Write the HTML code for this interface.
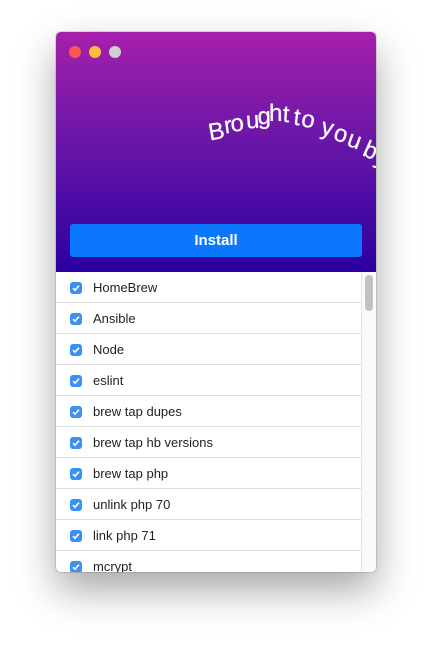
<!DOCTYPE html>
<html><head><style>
body{margin:0;width:432px;height:653px;background:#fff;position:relative;overflow:hidden;font-family:"Liberation Sans",sans-serif}
.win{position:absolute;left:56px;top:32px;width:320px;height:540px;border-radius:5px;overflow:hidden;box-shadow:0 18px 40px rgba(0,0,0,.35),0 0 0 1px rgba(0,0,0,.12);background:#fff}
.hdr{position:absolute;left:0;top:0;width:320px;height:240px;background:linear-gradient(#a520ab,#6a16a8 45%,#2a00a0 100%);overflow:hidden}
.dot{position:absolute;top:14px;width:12px;height:12px;border-radius:50%}
.btn{position:absolute;left:14px;top:192px;width:292px;height:33px;background:#0a77fd;border-radius:3px;color:#fff;font-weight:bold;font-size:15px;text-align:center;line-height:33px}
.c{position:absolute;color:#fff;font-size:24px;transform-origin:50% 100%;text-shadow:0 0 .6px #fff}
.list{position:absolute;left:0;top:240px;width:305px}
.row{height:30px;border-bottom:1px solid #ddd;position:relative;font-size:13px;color:#222;line-height:31px}
.row span{position:absolute;left:37px}
.cb{position:absolute;left:14px;top:10px;width:12px;height:12px;border-radius:3px;background:#3a91f5}
.cb svg{position:absolute;left:0;top:0}
.sb{position:absolute;left:305px;top:240px;width:15px;height:300px;background:#fafafa;border-left:1px solid #e5e5e5}
.th{position:absolute;left:3px;top:3px;width:8px;height:36px;border-radius:4px;background:#c2c2c2}
</style></head><body>
<div class="win">
<div class="hdr">
<div class="dot" style="left:13px;background:#fc5753"></div>
<div class="dot" style="left:33px;background:#fdbc40"></div>
<div class="dot" style="left:53px;background:#cfcfcf"></div>
<div class="c" style="left:155px;top:86px;transform:rotate(-10deg)">B</div>
<div class="c" style="left:170px;top:80px;transform:rotate(-8deg)">r</div>
<div class="c" style="left:176px;top:78px;transform:rotate(-6deg)">o</div>
<div class="c" style="left:191px;top:75px;transform:rotate(-4deg)">u</div>
<div class="c" style="left:202px;top:71px;transform:rotate(-2deg)">g</div>
<div class="c" style="left:213px;top:68px;transform:rotate(0deg)">h</div>
<div class="c" style="left:226px;top:69px;transform:rotate(3deg)">t</div>
<div class="c" style="left:236px;top:72px;transform:rotate(7deg)">t</div>
<div class="c" style="left:243px;top:74px;transform:rotate(10deg)">o</div>
<div class="c" style="left:262px;top:82px;transform:rotate(14deg)">y</div>
<div class="c" style="left:274px;top:88px;transform:rotate(17deg)">o</div>
<div class="c" style="left:287px;top:94px;transform:rotate(20deg)">u</div>
<div class="c" style="left:302px;top:104px;transform:rotate(24deg)">b</div>
<div class="c" style="left:314px;top:111px;transform:rotate(27deg)">y</div>
<div class="btn">Install</div>
</div>
<div class="list">
<div class="row"><div class="cb"><svg width="12" height="12"><path d="M3 6.2l2 2 4-4.5" stroke="#fff" stroke-width="1.6" fill="none"/></svg></div><span>HomeBrew</span></div>
<div class="row"><div class="cb"><svg width="12" height="12"><path d="M3 6.2l2 2 4-4.5" stroke="#fff" stroke-width="1.6" fill="none"/></svg></div><span>Ansible</span></div>
<div class="row"><div class="cb"><svg width="12" height="12"><path d="M3 6.2l2 2 4-4.5" stroke="#fff" stroke-width="1.6" fill="none"/></svg></div><span>Node</span></div>
<div class="row"><div class="cb"><svg width="12" height="12"><path d="M3 6.2l2 2 4-4.5" stroke="#fff" stroke-width="1.6" fill="none"/></svg></div><span>eslint</span></div>
<div class="row"><div class="cb"><svg width="12" height="12"><path d="M3 6.2l2 2 4-4.5" stroke="#fff" stroke-width="1.6" fill="none"/></svg></div><span>brew tap dupes</span></div>
<div class="row"><div class="cb"><svg width="12" height="12"><path d="M3 6.2l2 2 4-4.5" stroke="#fff" stroke-width="1.6" fill="none"/></svg></div><span>brew tap hb versions</span></div>
<div class="row"><div class="cb"><svg width="12" height="12"><path d="M3 6.2l2 2 4-4.5" stroke="#fff" stroke-width="1.6" fill="none"/></svg></div><span>brew tap php</span></div>
<div class="row"><div class="cb"><svg width="12" height="12"><path d="M3 6.2l2 2 4-4.5" stroke="#fff" stroke-width="1.6" fill="none"/></svg></div><span>unlink php 70</span></div>
<div class="row"><div class="cb"><svg width="12" height="12"><path d="M3 6.2l2 2 4-4.5" stroke="#fff" stroke-width="1.6" fill="none"/></svg></div><span>link php 71</span></div>
<div class="row"><div class="cb"><svg width="12" height="12"><path d="M3 6.2l2 2 4-4.5" stroke="#fff" stroke-width="1.6" fill="none"/></svg></div><span>mcrypt</span></div>
</div>
<div class="sb"><div class="th"></div></div>
</div>
</body></html>
